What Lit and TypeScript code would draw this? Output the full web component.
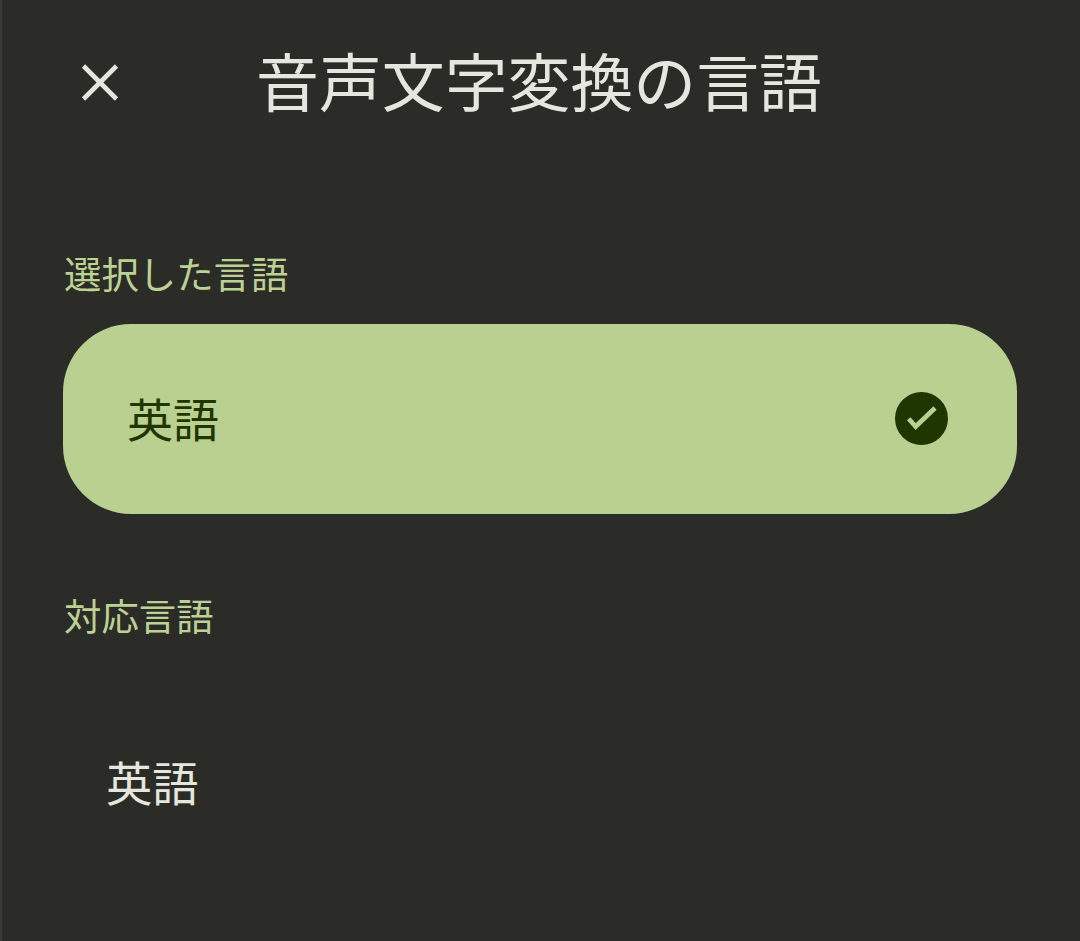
import { LitElement, html, css } from "lit";
import { customElement } from "lit/decorators.js";

@customElement("app-root")
export class AppRoot extends LitElement {
  static styles = css`
    :host { display: block; width: 1080px; height: 941px; background: #2b2c28; overflow: hidden;
      box-shadow: inset 2px 0 0 #3a3b37;
      font-family: "Noto Sans CJK JP", "Noto Sans", sans-serif; }
    .head { display: flex; align-items: center; height: 84px; margin-top: 41px; padding-left: 78px; }
    .close { width: 44px; height: 44px; display: block; }
    .title { padding-bottom: 8px; margin-left: 134px; font-size: 62.9px; line-height: 84px; color: #e5e6de; }
    .label { font-size: 37.4px; line-height: 50px; color: #bdd193; margin-left: 64px; }
    .l1 { margin-top: 123px; }
    .sel { margin: 26px 63px 0 63px; height: 190px; border-radius: 68px; background: #b9d091; display: flex; align-items: center; justify-content: space-between; padding: 0 69px 0 64px; color: #1f3600; font-size: 46px; }
    .sel span { margin-bottom: 4px; }
    .sel svg { width: 53px; height: 53px; display: block; margin-bottom: 2px; }
    .l2 { margin-top: 76px; }
    .item { margin: 111px 0 0 106px; font-size: 46.3px; line-height: 60px; color: #e5e6de; }
  `;
  render() {
    return html`
      <div class="head">
        <svg class="close" viewBox="0 0 44 44"><path d="M5.5 5 L38.5 38 M38.5 5 L5.5 38" stroke="#e5e6de" stroke-width="4.6" fill="none"/></svg>
        <div class="title">音声文字変換の言語</div>
      </div>
      <div class="label l1">選択した言語</div>
      <div class="sel"><span>英語</span>
        <svg viewBox="0 0 53 53"><circle cx="26.5" cy="26.5" r="26.5" fill="#1f3600"/><path d="M13.7 26.7 L20.7 34.5 L40 16" stroke="#b9d091" stroke-width="4.7" fill="none"/></svg>
      </div>
      <div class="label l2">対応言語</div>
      <div class="item">英語</div>
    `;
  }
}
